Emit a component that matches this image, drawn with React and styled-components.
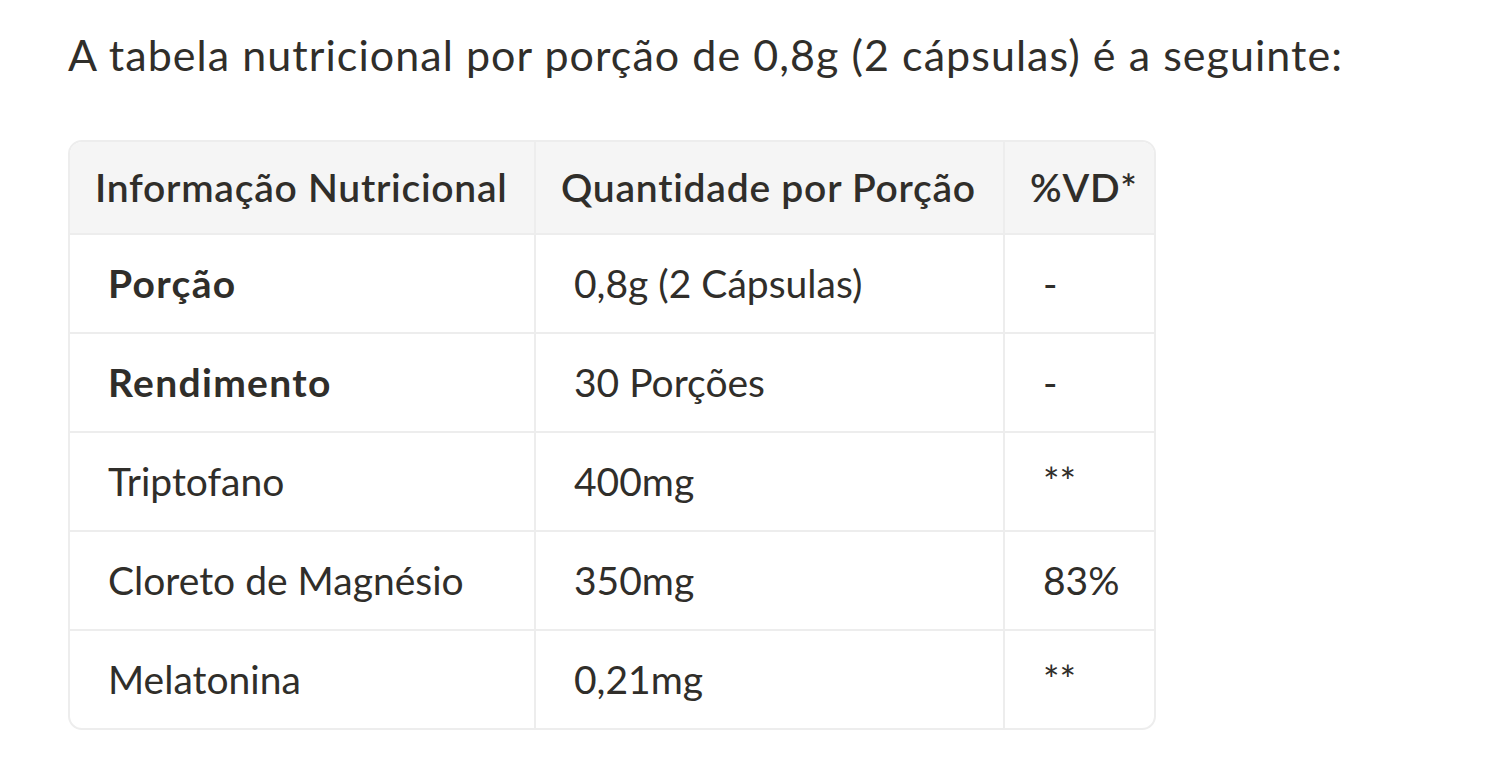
import React from "react";
import styled, { createGlobalStyle } from "styled-components";

const Global = createGlobalStyle`
  html, body { margin: 0; padding: 0; background: #ffffff; }
  body { font-family: "Lato", "Noto Sans", sans-serif; color: #302e2a; }
`;

const Page = styled.main`
  padding: 23px 68px 40px 68px;
`;

const Intro = styled.p`
  margin: 0 0 53px 0;
  font-size: 43px;
  line-height: 64px;
  letter-spacing: 1.05px;
  font-weight: 400;
`;

const Wrap = styled.div`
  width: 1088px;
  border: 2px solid #ededed;
  border-radius: 14px;
  overflow: hidden;
  box-sizing: border-box;
`;

const Table = styled.table`
  width: 1084px;
  border-collapse: separate;
  border-spacing: 0;
  table-layout: fixed;
`;

const Head = styled.th`
  background: #f5f5f5;
  padding: 0 0 0 25px;
  line-height: 91px;
  text-align: left;
  font-size: 39px;
  font-weight: 600;
  letter-spacing: 0.75px;
  color: #302e2a;
  white-space: nowrap;
  border-left: ${(p) => (p.$first ? "none" : "2px solid #ededed")};
  border-bottom: 2px solid #ededed;
`;

const Cell = styled.td`
  padding: 0 0 0 38px;
  line-height: 97px;
  font-size: 39px;
  font-weight: ${(p) => (p.$bold ? 700 : 400)};
  letter-spacing: ${(p) => (p.$bold ? "1.3px" : "0")};
  white-space: nowrap;
  vertical-align: middle;
  border-left: ${(p) => (p.$first ? "none" : "2px solid #ededed")};
  border-bottom: ${(p) => (p.$last ? "none" : "2px solid #ededed")};
`;

const rows = [
  { name: "Porção", qty: "0,8g (2 Cápsulas)", vd: "-", bold: true },
  { name: "Rendimento", qty: "30 Porções", vd: "-", bold: true },
  { name: "Triptofano", qty: "400mg", vd: "**" },
  { name: "Cloreto de Magnésio", qty: "350mg", vd: "83%" },
  { name: "Melatonina", qty: "0,21mg", vd: "**" },
];

export default function App() {
  return (
    <Page>
      <Global />
      <Intro>A tabela nutricional por porção de 0,8g (2 cápsulas) é a seguinte:</Intro>
      <Wrap>
        <Table>
          <colgroup>
            <col style={{ width: "464px" }} />
            <col style={{ width: "469px" }} />
            <col style={{ width: "151px" }} />
          </colgroup>
          <thead>
            <tr>
              <Head $first>Informação Nutricional</Head>
              <Head>Quantidade por Porção</Head>
              <Head>%VD*</Head>
            </tr>
          </thead>
          <tbody>
            {rows.map((r, i) => (
              <tr key={r.name}>
                <Cell $first $bold={r.bold} $last={i === rows.length - 1}>{r.name}</Cell>
                <Cell $last={i === rows.length - 1}>{r.qty}</Cell>
                <Cell $last={i === rows.length - 1}>{r.vd}</Cell>
              </tr>
            ))}
          </tbody>
        </Table>
      </Wrap>
    </Page>
  );
}
